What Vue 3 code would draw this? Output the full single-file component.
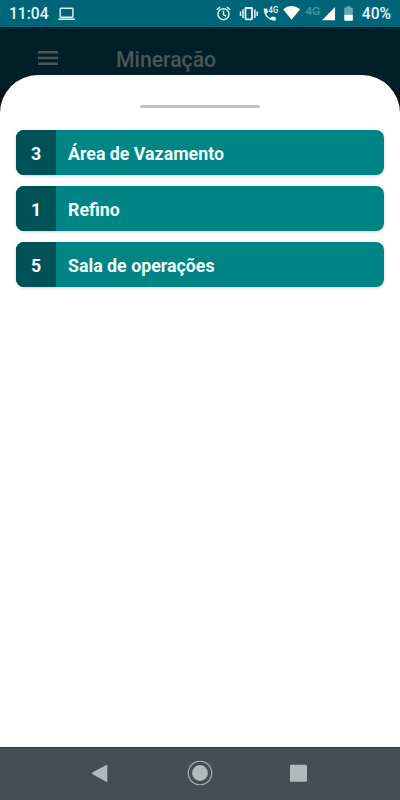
<template>
    <div class="screen">
        <div class="status-bar">
            <span class="clock">11:04</span>
            <svg class="laptop" viewBox="0 0 18 14">
                <rect x="2.2" y="1.2" width="12.7" height="9" rx="0.6" fill="none" stroke="#d9f3f7" stroke-width="1.4" />
                <path d="M0.3 11.4h16.6v1.6H0.3z" fill="#d9f3f7" />
            </svg>
            <svg class="status-icons" viewBox="0 0 150 27">
                <g fill="none" stroke="#e6f6f8" stroke-width="1.4">
                    <circle cx="13.5" cy="14.2" r="5.5" />
                    <path d="M13.5 10.8v3.8l2.5 1.5M6.9 9.8l3.1-2.7M20.1 9.8l-3.1-2.7" />
                </g>
                <g fill="none" stroke="#e6f6f8">
                    <rect x="35.5" y="8" width="6.6" height="11.4" rx="0.6" stroke-width="1.8" />
                    <path d="M33 9.3v8.8M44.9 9.3v8.8M30.5 11.4v4.6M47.3 11.4v4.6" stroke-width="1.5" />
                </g>
                <path
                    d="M53.8 9.2c0-.5.3-.8.8-.8h2.1c.5 0 .8.3.8.8 0 .9.1 1.7.4 2.5.1.3 0 .6-.2.8l-1.3 1.4c1 1.9 2.4 3.1 4.1 4.1l1.3-1.3c.2-.2.5-.3.8-.2.8.3 1.7.4 2.5.4.5 0 .8.4.8.8v2.1c0 .5-.3.8-.8.8-6.300 0-11.300-5-11.300-11.400z"
                    fill="#e6f6f8"
                />
                <text class="call-net" x="58.6" y="13.2" textLength="9.6" lengthAdjust="spacingAndGlyphs">4G</text>
                <path d="M73.2 9.2q8.4-6.6 17 0l-8.5 10.6z" fill="#fff" />
                <text class="mobile-net" x="95.3" y="14.6" textLength="15" lengthAdjust="spacingAndGlyphs">4G</text>
                <path d="M112.2 20.2h13V7z" fill="#fff" />
                <path d="M137 6.200h3.200v1.300h2.100q.7 0 .7.700v6.500h-8.600V8.200q0-.7.700-.7h1.900z" fill="#65a7b4" />
                <path d="M134.400 14.700h8.600v5.200q0 .8-.8.800h-7q-.8 0-.8-.8z" fill="#fff" />
            </svg>
            <span class="battery">40%</span>
        </div>

        <div class="page">
            <div class="app-bar">
                <svg class="menu" viewBox="0 0 20 14">
                    <path d="M0 1.2h20M0 7h20M0 12.8h20" stroke="#4b5657" stroke-width="2.4" />
                </svg>
                <h1 class="title">Mineração</h1>
            </div>

            <div class="sheet">
                <div class="handle"></div>
                <div class="areas">
                    <div v-for="area in areas" :key="area.name" class="area">
                        <div class="count">{{ area.count }}</div>
                        <div class="name">{{ area.name }}</div>
                    </div>
                </div>
            </div>
        </div>

        <div class="nav-bar">
            <svg viewBox="0 0 26 26">
                <path d="M4.6 12.300L18.300 4.900q1-.4 1 .5v15.800q0 .9-1 .5L4.600 14.200q-1.600-.9 0-1.900z" fill="#b3b9bb" />
            </svg>
            <svg viewBox="0 0 26 26">
                <circle cx="13" cy="13" r="11.7" fill="none" stroke="#b3b9bb" stroke-width="1.1" />
                <circle cx="13" cy="13" r="7.9" fill="#b3b9bb" />
            </svg>
            <svg viewBox="0 0 26 26">
                <rect x="4" y="4.800" width="17" height="17" rx="1.2" fill="#b3b9bb" />
            </svg>
        </div>
    </div>
</template>

<script setup>
const areas = [
    { count: 3, name: 'Área de Vazamento' },
    { count: 1, name: 'Refino' },
    { count: 5, name: 'Sala de operações' },
];
</script>

<style>
body {
    margin: 0;
}
</style>

<style scoped>
.screen {
    width: 400px;
    height: 800px;
    display: flex;
    flex-direction: column;
    overflow: hidden;
    font-family: Roboto, sans-serif;
}
.status-bar {
    height: 27px;
    flex: none;
    display: flex;
    align-items: center;
    box-sizing: border-box;
    padding: 0 9px;
    background-color: #006578;
    color: #e6f6f8;
}
.clock,
.battery {
    padding-top: 2px;
    font-size: 15.6px;
    font-weight: 500;
    line-height: 27px;
    white-space: nowrap;
}
.clock {
    width: 40px;
}
.laptop {
    width: 18px;
    height: 14px;
    margin-left: 9px;
}
.status-icons {
    width: 150px;
    height: 27px;
    margin-left: 134px;
}
.battery {
    margin-left: 2px;
}
.call-net {
    font-size: 8.5px;
    font-weight: 500;
    fill: #e6f6f8;
}
.mobile-net {
    font-size: 11px;
    font-weight: 600;
    fill: #4594a3;
}
.page {
    position: relative;
    flex: 1;
    background-color: #0e1111;
}
.app-bar {
    height: 62px;
    display: flex;
    align-items: center;
    box-sizing: border-box;
    padding: 0 38px;
    background-color: #001f28;
}
.menu {
    width: 20px;
    height: 14px;
}
.title {
    margin: 4px 0 0 58px;
    font-size: 21.2px;
    font-weight: 500;
    line-height: 28px;
    color: #4b5657;
}
.sheet {
    position: absolute;
    inset: 48px 0 0;
    box-sizing: border-box;
    padding: 30px 16px 0;
    border-radius: 38px 38px 0 0;
    background-color: #fff;
}
.handle {
    width: 120px;
    height: 3px;
    margin: 0 auto;
    border-radius: 2px;
    background-color: #c2c2c2;
}
.areas {
    display: flex;
    flex-direction: column;
    gap: 11px;
    margin-top: 22px;
}
.area {
    height: 45px;
    display: flex;
    overflow: hidden;
    border-radius: 8px;
    background-color: #008584;
    box-shadow: 0 1px 3px rgba(0, 70, 80, 0.25);
    font-size: 17.8px;
    font-weight: 700;
    line-height: 47px;
    color: #eefcfc;
}
.count {
    width: 40px;
    text-align: center;
    background-color: #005256;
}
.name {
    padding-left: 12px;
}
.nav-bar {
    height: 53px;
    flex: none;
    display: flex;
    align-items: center;
    justify-content: space-between;
    box-sizing: border-box;
    padding: 0 88px 2px;
    border-top: 1px solid #343a3f;
    background-color: #464e53;
}
.nav-bar svg {
    width: 26px;
    height: 26px;
}
</style>
